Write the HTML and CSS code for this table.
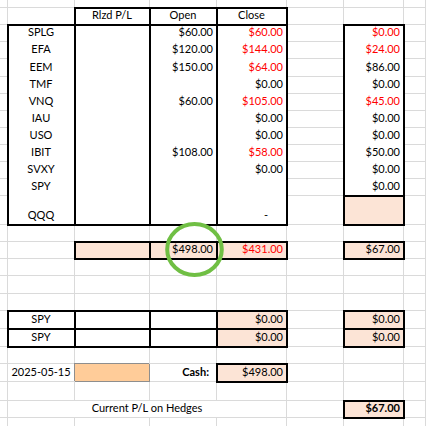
FILE: index.html
```html
<!doctype html>
<html lang="en">
    <head>
        <meta charset="UTF-8" />
        <meta name="viewport" content="width=device-width, initial-scale=1.0" />
        <title>Hedges</title>
        <link rel="stylesheet" href="styles.css">
    </head>
    <body>
        <div class="page">
            <div class="sheet">
                <!-- top partial row -->
                <div class="c"></div><div class="c"></div><div class="c"></div><div class="c"></div>
                <div class="c"></div><div class="c"></div><div class="c"></div><div class="c"></div>

                <!-- header -->
                <div class="c"></div>
                <div class="c"></div>
                <div class="c mid bx">Rlzd P/L</div>
                <div class="c mid bx">Open</div>
                <div class="c mid bx">Close</div>
                <div class="c"></div>
                <div class="c"></div>
                <div class="c"></div>

                <!-- positions -->
                <div class="c"></div>
                <div class="c blk bx">
                    <div class="v mid">SPLG</div>
                    <div class="v mid">EFA</div>
                    <div class="v mid">EEM</div>
                    <div class="v mid">TMF</div>
                    <div class="v mid">VNQ</div>
                    <div class="v mid">IAU</div>
                    <div class="v mid">USO</div>
                    <div class="v mid">IBIT</div>
                    <div class="v mid">SVXY</div>
                    <div class="v mid">SPY</div>
                    <div class="v mid">QQQ</div>
                </div>
                <div class="c blk bx"></div>
                <div class="c blk bx">
                    <div class="v num">$60.00</div>
                    <div class="v num">$120.00</div>
                    <div class="v num">$150.00</div>
                    <div class="v num"></div>
                    <div class="v num">$60.00</div>
                    <div class="v num"></div>
                    <div class="v num"></div>
                    <div class="v num">$108.00</div>
                    <div class="v num"></div>
                    <div class="v num"></div>
                    <div class="v num"></div>
                </div>
                <div class="c blk bx">
                    <div class="v num neg">$60.00</div>
                    <div class="v num neg">$144.00</div>
                    <div class="v num neg">$64.00</div>
                    <div class="v num">$0.00</div>
                    <div class="v num neg">$105.00</div>
                    <div class="v num">$0.00</div>
                    <div class="v num">$0.00</div>
                    <div class="v num neg">$58.00</div>
                    <div class="v num">$0.00</div>
                    <div class="v num"></div>
                    <div class="v num dash">-</div>
                </div>
                <div class="c"></div>
                <div class="c blk short bx">
                    <div class="v num neg">$0.00</div>
                    <div class="v num neg">$24.00</div>
                    <div class="v num">$86.00</div>
                    <div class="v num">$0.00</div>
                    <div class="v num neg">$45.00</div>
                    <div class="v num">$0.00</div>
                    <div class="v num">$0.00</div>
                    <div class="v num">$50.00</div>
                    <div class="v num">$0.00</div>
                    <div class="v num">$0.00</div>
                </div>
                <div class="c"></div>

                <div class="c"></div><div class="c"></div><div class="c"></div>
                <div class="c"></div><div class="c"></div><div class="c"></div>
                <div class="c"></div><div class="c"></div><div class="c"></div>
                <div class="c"></div><div class="c"></div><div class="c"></div>
                <div class="c"></div><div class="c"></div><div class="c"></div>
                <div class="c"></div><div class="c"></div><div class="c"></div>
                <div class="c"></div><div class="c"></div><div class="c"></div>
                <div class="c"></div><div class="c"></div><div class="c"></div>
                <div class="c"></div><div class="c"></div><div class="c"></div>

                <!-- QQQ row, right column -->
                <div class="c"></div><div class="c"></div>
                <div class="c fill bx"></div>
                <div class="c"></div>

                <!-- blank -->
                <div class="c"></div><div class="c"></div><div class="c"></div><div class="c"></div>
                <div class="c"></div><div class="c"></div><div class="c"></div><div class="c"></div>

                <!-- totals -->
                <div class="c"></div>
                <div class="c"></div>
                <div class="c fill bx"></div>
                <div class="c fill bx num">$498.00</div>
                <div class="c fill bx num neg">$431.00</div>
                <div class="c"></div>
                <div class="c fill bx num">$67.00</div>
                <div class="c"></div>

                <!-- blank x3 -->
                <div class="c"></div><div class="c"></div><div class="c"></div><div class="c"></div>
                <div class="c"></div><div class="c"></div><div class="c"></div><div class="c"></div>
                <div class="c"></div><div class="c"></div><div class="c"></div><div class="c"></div>
                <div class="c"></div><div class="c"></div><div class="c"></div><div class="c"></div>
                <div class="c"></div><div class="c"></div><div class="c"></div><div class="c"></div>
                <div class="c"></div><div class="c"></div><div class="c"></div><div class="c"></div>

                <!-- hedges -->
                <div class="c"></div>
                <div class="c mid bx">SPY</div>
                <div class="c bx"></div>
                <div class="c bx"></div>
                <div class="c fill bx num">$0.00</div>
                <div class="c"></div>
                <div class="c fill bx num">$0.00</div>
                <div class="c"></div>

                <div class="c"></div>
                <div class="c mid bx">SPY</div>
                <div class="c bx"></div>
                <div class="c bx"></div>
                <div class="c fill bx num">$0.00</div>
                <div class="c"></div>
                <div class="c fill bx num">$0.00</div>
                <div class="c"></div>

                <!-- blank -->
                <div class="c"></div><div class="c"></div><div class="c"></div><div class="c"></div>
                <div class="c"></div><div class="c"></div><div class="c"></div><div class="c"></div>

                <!-- cash -->
                <div class="c"></div>
                <div class="c mid">2025-05-15</div>
                <div class="c date"></div>
                <div class="c num label">Cash:</div>
                <div class="c fill bx num">$498.00</div>
                <div class="c"></div>
                <div class="c"></div>
                <div class="c"></div>

                <!-- blank -->
                <div class="c"></div><div class="c"></div><div class="c"></div><div class="c"></div>
                <div class="c"></div><div class="c"></div><div class="c"></div><div class="c"></div>

                <!-- current p/l -->
                <div class="c"></div>
                <div class="c wide mid">Current P/L on Hedges</div>
                <div class="c"></div>
                <div class="c fill bx num strong">$67.00</div>
                <div class="c"></div>

                <!-- bottom partial row -->
                <div class="c"></div><div class="c"></div><div class="c"></div><div class="c"></div>
                <div class="c"></div><div class="c"></div><div class="c"></div><div class="c"></div>
            </div>

            <!-- marker drawn over the open total -->
            <svg class="ring" width="60" height="57" viewBox="0 0 60 57">
                <ellipse cx="29.5" cy="27.5" rx="27.3" ry="25.5" fill="none" stroke="#70bf44" stroke-width="4" />
            </svg>
        </div>
    </body>
</html>
```

FILE: styles.css
```css
body {
    margin: 0;
    font-family: Lato, "Open Sans", sans-serif;
    font-size: 11px;
    color: #000;
    background: #fff;
    overflow: hidden;
}
.page {
    position: relative;
}
.sheet {
    display: grid;
    grid-template-columns: 8px 67px 75px 67px 70px 57px 60px 1fr;
    grid-template-rows:
        8px 17px 17px 17px 18px 17px 17px 17px 17px 17px 17px 17px 29px
        17px 17px 17px 18px 17px 18px 18px 17px 18px 19px 17px 20px;
}
.c,
.v {
    display: flex;
    align-items: flex-end;
    padding: 0 3px 2px;
    line-height: 14px;
    white-space: nowrap;
    border-right: 1px solid #dadada;
    border-bottom: 1px solid #dadada;
}
.v {
    border-right: 0;
    border-bottom-color: transparent;
}
.v:last-child {
    border-bottom: 0;
}
.blk {
    display: grid;
    grid-template-rows: subgrid;
    grid-row: span 11;
    padding: 0;
    background: #fff;
}
.blk.short {
    grid-row: span 10;
}
.mid {
    justify-content: center;
}
.num {
    justify-content: flex-end;
}
.neg {
    color: #f00;
}
.dash {
    padding-right: 18px;
}
.fill {
    background: #fce4d6;
}
.bx {
    outline: 2px solid #000;
    outline-offset: -1px;
    z-index: 1;
}
.date {
    background: #fc9;
    border-color: #8e8e8e;
    box-shadow: -1px -1px 0 #8e8e8e;
}
.label {
    font-weight: bold;
    padding-right: 7px;
}
.strong {
    font-weight: bold;
}
.wide {
    grid-column: span 4;
}
.ring {
    position: absolute;
    left: 165px;
    top: 222px;
    z-index: 2;
}
```
